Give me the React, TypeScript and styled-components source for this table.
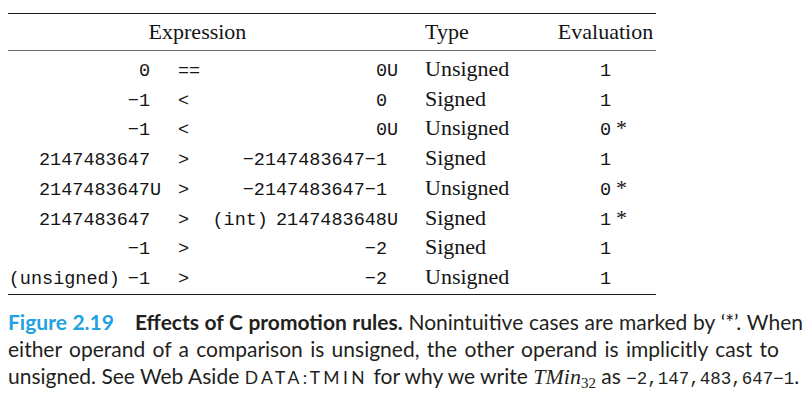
import React from "react";
import styled, { createGlobalStyle } from "styled-components";

const Global = createGlobalStyle`
  html, body { margin: 0; padding: 0; background: #ffffff; }
  body { width: 805px; height: 411px; overflow: hidden; }
`;

const Page = styled.div`
  padding: 13px 0 0 8px;
  box-sizing: border-box;
  width: 805px;
  height: 411px;
`;

const Table = styled.div`
  width: 648px;
  border-top: 1.4px solid #1a1a1a;
  border-bottom: 1.4px solid #1a1a1a;
  color: #141414;
`;

const HeadRow = styled.div`
  display: flex;
  align-items: baseline;
  height: 37px;
  box-sizing: border-box;
  padding-top: 7px;
  border-bottom: 1px solid #6a6a6a;
  font-family: "Liberation Serif", "Times New Roman", serif;
  font-size: 22px;
  line-height: 22px;
`;

const Body = styled.div`
  padding: 0 0 5px 0;
`;

const Row = styled.div`
  display: flex;
  align-items: baseline;
  height: 29.71px;
  box-sizing: border-box;
  padding-top: 7px;
`;

const Cell = styled.div<{ $w: number; $align?: string; $pl?: number }>`
  width: ${(p) => p.$w}px;
  flex: none;
  text-align: ${(p) => p.$align || "left"};
  padding-left: ${(p) => p.$pl || 0}px;
  box-sizing: border-box;
  white-space: nowrap;
  line-height: 1;
`;

const Mono = styled.span`
  font-family: "Liberation Mono", "Courier New", monospace;
  font-size: 18.5px;
`;

const Serif = styled.span`
  font-family: "Liberation Serif", "Times New Roman", serif;
  font-size: 22px;
`;

const Hang = styled.span`
  margin-right: -1ch;
`;

const GapSpace = styled.span`
  display: inline-block;
  width: 8px;
`;

const Star = styled.span`
  display: inline-block;
  width: 0;
  white-space: nowrap;
  font-family: "Liberation Serif", "Times New Roman", serif;
  font-size: 22px;
  padding-left: 5px;
  margin-right: -5px;
`;

const Caption = styled.div`
  margin-top: 13px;
  font-family: Lato, "Noto Sans", sans-serif;
  font-size: 21px;
  line-height: 27px;
  color: #231f20;
`;

const CaptionLine = styled.div<{ $justify?: number }>`
  white-space: nowrap;
  ${(p) =>
    p.$justify
      ? `width: ${p.$justify}px; white-space: normal; text-align: justify; text-align-last: justify;`
      : ""}
`;

const Label = styled.span`
  color: #1fa2de;
  font-weight: 700;
  margin-right: 21px;
`;

const Bold = styled.span`
  font-weight: 700;
`;

const SmallCaps = styled.span`
  text-transform: uppercase;
  font-size: 17.5px;
  letter-spacing: 3.4px;
`;

const MathI = styled.span`
  font-family: "Liberation Serif", "Times New Roman", serif;
  font-style: italic;
  font-size: 22px;
`;

const Sub = styled.sub`
  font-family: "Liberation Serif", "Times New Roman", serif;
  font-size: 15px;
  vertical-align: -4px;
  line-height: 0;
`;

const CapMono = styled.span`
  font-family: "Liberation Mono", "Courier New", monospace;
  font-size: 17.5px;
`;

type R = {
  l: React.ReactNode;
  lu?: boolean;
  op: string;
  r: React.ReactNode;
  ru?: boolean;
  t: string;
  e: string;
  star?: boolean;
};

const rows: R[] = [
  { l: "0", op: "==", r: "0", ru: true, t: "Unsigned", e: "1" },
  { l: "−1", op: "<", r: "0", t: "Signed", e: "1" },
  { l: "−1", op: "<", r: "0", ru: true, t: "Unsigned", e: "0", star: true },
  { l: "2147483647", op: ">", r: "−2147483647−1", t: "Signed", e: "1" },
  { l: "2147483647", lu: true, op: ">", r: "−2147483647−1", t: "Unsigned", e: "0", star: true },
  {
    l: "2147483647",
    op: ">",
    r: (
      <>
        (int)
        <GapSpace />
        2147483648
      </>
    ),
    ru: true,
    t: "Signed",
    e: "1",
    star: true,
  },
  { l: "−1", op: ">", r: "−2", t: "Signed", e: "1" },
  {
    l: (
      <>
        (unsigned)
        <GapSpace />
        −1
      </>
    ),
    op: ">",
    r: "−2",
    t: "Unsigned",
    e: "1",
  },
];

export default function App() {
  return (
    <Page>
      <Global />
      <Table>
        <HeadRow>
          <Cell $w={379} $align="center">Expression</Cell>
          <Cell $w={168} $pl={38}>Type</Cell>
          <Cell $w={101} $align="center">Evaluation</Cell>
        </HeadRow>
        <Body>
          {rows.map((r, i) => (
            <Row key={i}>
              <Cell $w={142} $align="right">
                <Mono>
                  {r.l}
                  {r.lu && <Hang>U</Hang>}
                </Mono>
              </Cell>
              <Cell $w={62} $pl={28}>
                <Mono>{r.op}</Mono>
              </Cell>
              <Cell $w={175} $align="right">
                <Mono>
                  {r.r}
                  {r.ru && <Hang>U</Hang>}
                </Mono>
              </Cell>
              <Cell $w={168} $pl={38}>
                <Serif>{r.t}</Serif>
              </Cell>
              <Cell $w={101} $align="center">
                <Mono>{r.e}</Mono>
                {r.star && <Star>*</Star>}
              </Cell>
            </Row>
          ))}
        </Body>
      </Table>
      <Caption>
        <CaptionLine $justify={795}>
          <Label>Figure 2.19</Label>
          <Bold>Effects of C promotion rules.</Bold> Nonintuitive cases are marked by ‘*’. When
        </CaptionLine>
        <CaptionLine $justify={771}>
          either operand of a comparison is unsigned, the other operand is implicitly cast to
        </CaptionLine>
        <CaptionLine>
          unsigned. See Web Aside <SmallCaps>data:tmin</SmallCaps> for why we write <MathI>TMin</MathI>
          <Sub>32</Sub> as <CapMono>−2,147,483,647−1</CapMono>.
        </CaptionLine>
      </Caption>
    </Page>
  );
}
